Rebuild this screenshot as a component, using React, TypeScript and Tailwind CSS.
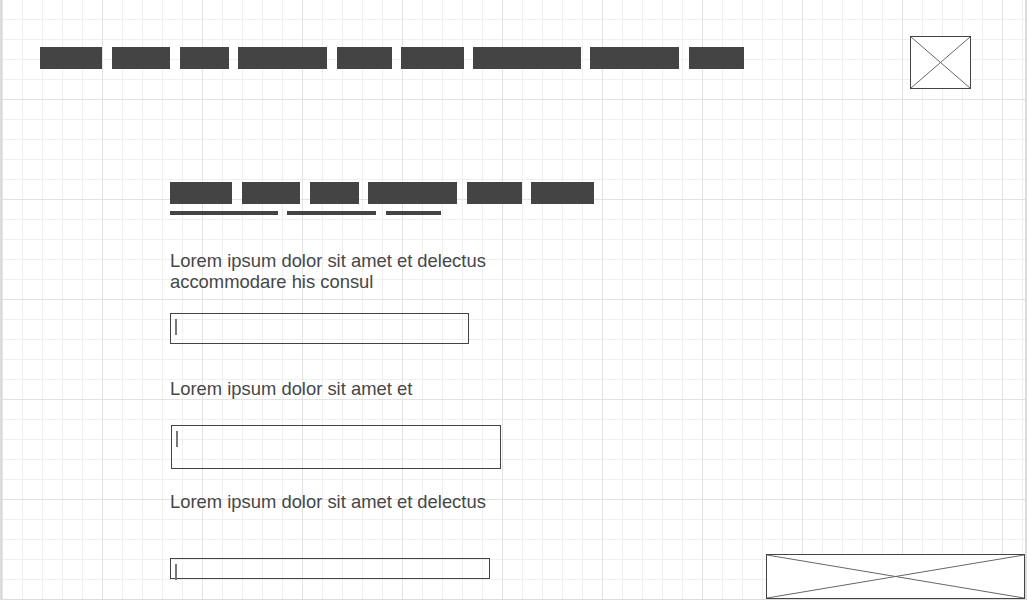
import type { ReactNode } from 'react';

const barClass = 'h-[22px] bg-[#444]';

function Placeholder({ className }: { className: string }) {
  return (
    <div className={`border border-[#444] bg-white ${className}`}>
      <svg className="block h-full w-full" viewBox="0 0 100 100" preserveAspectRatio="none">
        <line x1="0" y1="0" x2="100" y2="100" stroke="#666" strokeWidth="1" vectorEffect="non-scaling-stroke" />
        <line x1="100" y1="0" x2="0" y2="100" stroke="#666" strokeWidth="1" vectorEffect="non-scaling-stroke" />
      </svg>
    </div>
  );
}

function Field({ className }: { className: string }) {
  return (
    <div className={`border border-[#444] ${className}`}>
      <div className="ml-[4px] mt-[5px] h-[16px] w-[2px] bg-[#777]" />
    </div>
  );
}

function Label({ children, className }: { children: ReactNode; className: string }) {
  return (
    <p className={`text-[18.4px] leading-[21px] text-[#474747] ${className}`}>{children}</p>
  );
}

export default function App() {
  return (
    <div
      className="relative flex h-[600px] w-[1027px] flex-col overflow-hidden border-b border-l-2 border-r-2 border-[#dcdcdc] bg-white font-['Liberation_Sans',Arial,sans-serif] [background-image:linear-gradient(to_right,#e3e3e3_1px,transparent_1px),linear-gradient(to_bottom,#e3e3e3_1px,transparent_1px),linear-gradient(to_right,#efefef_1px,transparent_1px),linear-gradient(to_bottom,#efefef_1px,transparent_1px)] [background-position:0px_99px,0px_99px,0px_19px,0px_19px] [background-size:100px_100px,100px_100px,20px_20px,20px_20px]"
    >
      {/* header */}
      <header className="mt-[36px] flex items-start">
        <nav className="ml-[38px] mt-[11px] flex">
          <div className={`${barClass} w-[62px]`} />
          <div className={`${barClass} ml-[10px] w-[58px]`} />
          <div className={`${barClass} ml-[10px] w-[49px]`} />
          <div className={`${barClass} ml-[9px] w-[89px]`} />
          <div className={`${barClass} ml-[10px] w-[55px]`} />
          <div className={`${barClass} ml-[9px] w-[63px]`} />
          <div className={`${barClass} ml-[9px] w-[108px]`} />
          <div className={`${barClass} ml-[9px] w-[89px]`} />
          <div className={`${barClass} ml-[10px] w-[55px]`} />
        </nav>
        <Placeholder className="ml-auto mr-[54px] h-[53px] w-[61px]" />
      </header>

      <div className="flex flex-1">
        <main className="ml-[168px] flex flex-col items-start">
          {/* tabs */}
          <div className="mt-[93px] flex">
            <div className={`${barClass} w-[62px]`} />
            <div className={`${barClass} ml-[10px] w-[58px]`} />
            <div className={`${barClass} ml-[10px] w-[49px]`} />
            <div className={`${barClass} ml-[9px] w-[89px]`} />
            <div className={`${barClass} ml-[10px] w-[55px]`} />
            <div className={`${barClass} ml-[9px] w-[63px]`} />
          </div>
          <div className="mt-[7px] flex">
            <div className="h-[4px] w-[108px] bg-[#444]" />
            <div className="ml-[9px] h-[4px] w-[89px] bg-[#444]" />
            <div className="ml-[10px] h-[4px] w-[55px] bg-[#444]" />
          </div>

          <Label className="mt-[35px] w-[330px]">
            Lorem ipsum dolor sit amet et delectus accommodare his consul
          </Label>
          <Field className="mt-[21px] h-[31px] w-[299px]" />

          <Label className="mt-[34px]">Lorem ipsum dolor sit amet et</Label>
          <Field className="ml-[1px] mt-[26px] h-[44px] w-[330px]" />

          <Label className="mt-[22px]">Lorem ipsum dolor sit amet et delectus</Label>
          <Field className="mt-[46px] h-[21px] w-[320px]" />
        </main>

        <aside className="ml-auto self-end">
          <Placeholder className="h-[45px] w-[259px]" />
        </aside>
      </div>
    </div>
  );
}
